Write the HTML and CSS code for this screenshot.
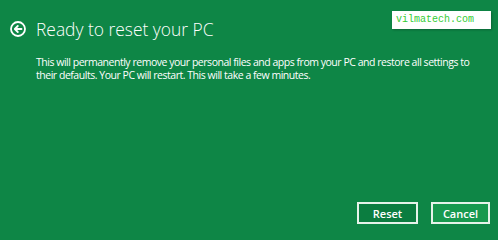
FILE: index.html
```html
<!DOCTYPE html>
<html lang="en">
<head>
  <meta charset="UTF-8" />
  <title>Ready to reset your PC</title>
  <link rel="stylesheet" href="styles.css">
</head>
<body>

  <div class="dialog">
    <div class="header">
      <svg class="back-icon" width="16" height="16" viewBox="0 0 16 16">
        <circle cx="8" cy="8" r="7" fill="none" stroke="#fff" stroke-width="1.8"/>
        <path d="M11.5 8H5M7.8 5L4.8 8l3 3" fill="none" stroke="#fff" stroke-width="1.8" stroke-linecap="round" stroke-linejoin="round"/>
      </svg>
      <h1 class="title">Ready to reset your PC</h1>
    </div>

    <p class="message">This will permanently remove your personal files and apps from your PC and restore all settings to their defaults. Your PC will restart. This will take a few minutes.</p>

    <div class="actions">
      <button class="btn btn-reset">Reset</button>
      <button class="btn btn-cancel">Cancel</button>
    </div>
  </div>

  <div class="watermark">vilmatech.com</div>

</body>
</html>
```

FILE: styles.css
```css
* {
  margin: 0;
  padding: 0;
  box-sizing: border-box;
}

html, body {
  width: 498px;
  height: 240px;
  overflow: hidden;
  background: #0e8646;
  color: white;
  font-family: "Open Sans", "Noto Sans", sans-serif;
}

.dialog {
  height: 240px;
  display: flex;
  flex-direction: column;
  padding: 19px 8px 16px 10px;
}

.header {
  display: flex;
  align-items: center;
  gap: 10px;
}

.back-icon {
  flex: none;
}

.title {
  font-size: 17.4px;
  font-weight: 300;
  line-height: 20px;
}

.message {
  margin: 17px 0 0 26px;
  font-size: 10.5px;
  letter-spacing: -0.47px;
  line-height: 13px;
  max-width: 445px;
}

.actions {
  margin-top: auto;
  display: flex;
  justify-content: flex-end;
  gap: 13px;
}

.btn {
  height: 22px;
  border: 2px solid #e6f3ea;
  color: white;
  font-family: "Open Sans", sans-serif;
  font-size: 11px;
  font-weight: 600;
  cursor: pointer;
}

.btn-reset {
  width: 61px;
  background: #0b7d40;
}

.btn-cancel {
  width: 59px;
  background: #17994f;
}

/* site watermark pasted over the screenshot */
.watermark {
  position: absolute;
  top: 11px;
  left: 392px;
  width: 99px;
  height: 18px;
  padding: 3px 0 0 4px;
  background: #fff;
  box-shadow: 1px 1px 2px rgba(0, 0, 0, 0.25);
  color: #33cc33;
  font-family: "Liberation Mono", monospace;
  font-size: 10px;
  line-height: 12px;
}
```
